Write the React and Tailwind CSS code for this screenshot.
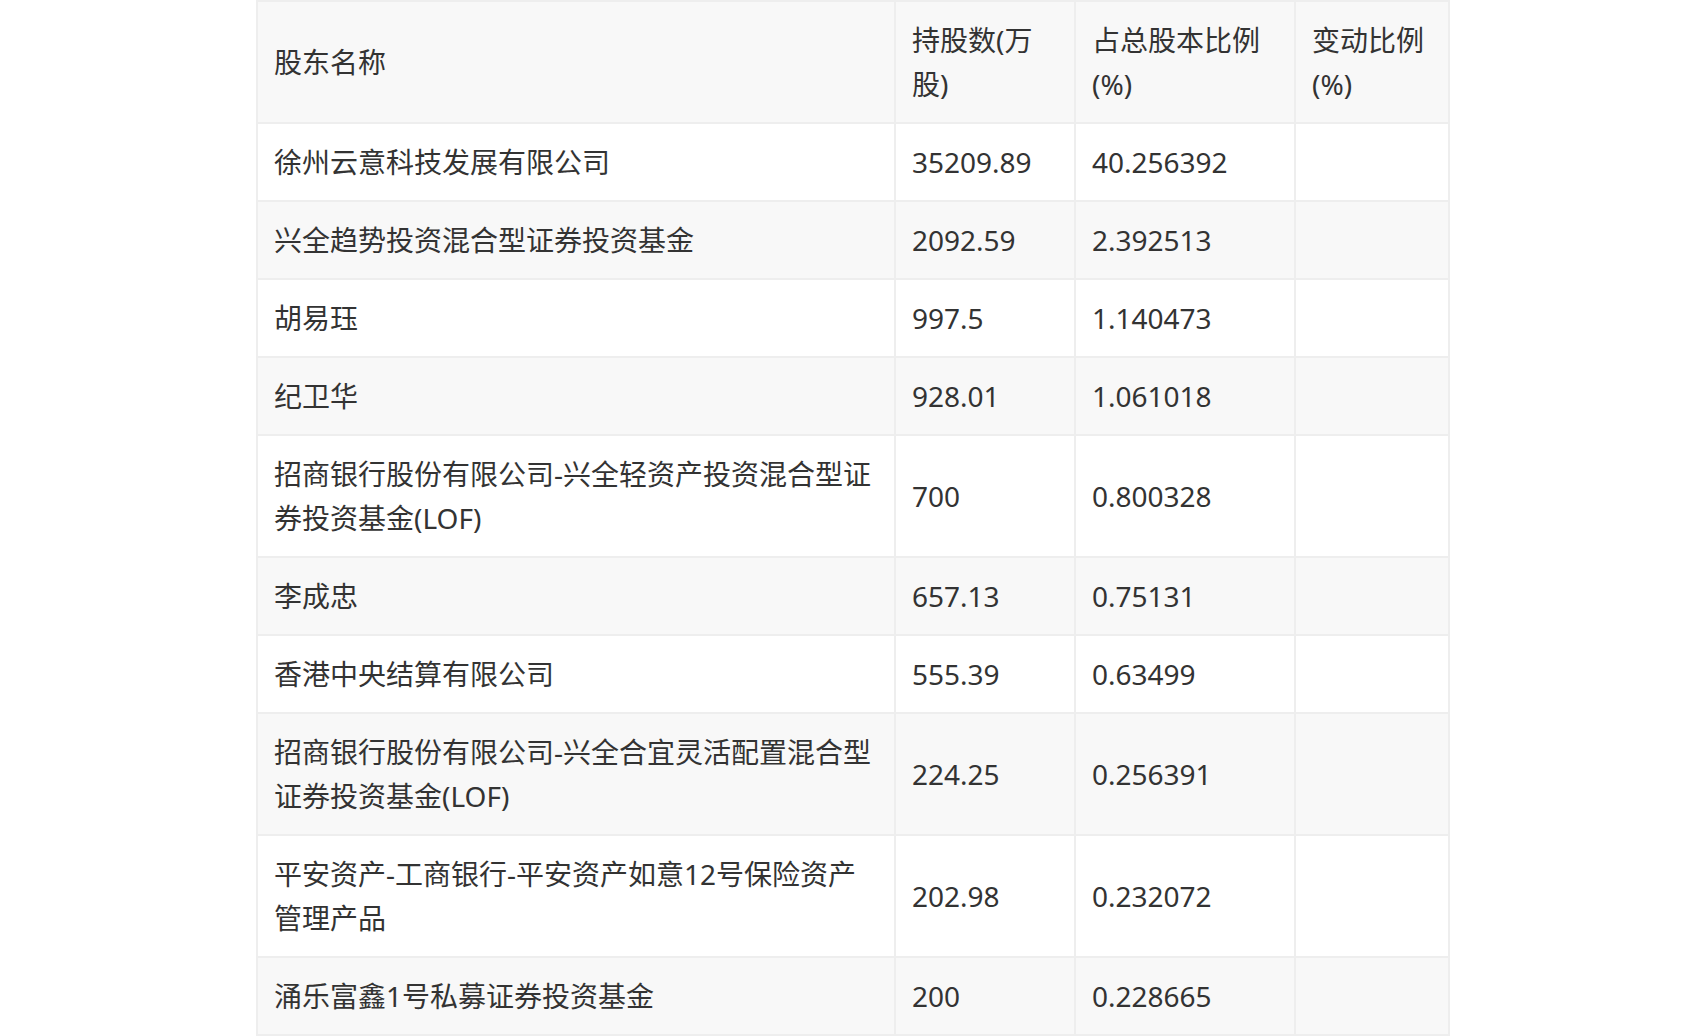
import React from 'react';

const rows = [
  ['徐州云意科技发展有限公司', '35209.89', '40.256392'],
  ['兴全趋势投资混合型证券投资基金', '2092.59', '2.392513'],
  ['胡易珏', '997.5', '1.140473'],
  ['纪卫华', '928.01', '1.061018'],
  ['招商银行股份有限公司-兴全轻资产投资混合型证券投资基金(LOF)', '700', '0.800328'],
  ['李成忠', '657.13', '0.75131'],
  ['香港中央结算有限公司', '555.39', '0.63499'],
  ['招商银行股份有限公司-兴全合宜灵活配置混合型证券投资基金(LOF)', '224.25', '0.256391'],
  ['平安资产-工商银行-平安资产如意12号保险资产管理产品', '202.98', '0.232072'],
  ['涌乐富鑫1号私募证券投资基金', '200', '0.228665'],
];

const cell = 'border-2 border-[#eeeeee] px-[16px] py-[16px] align-middle';

export default function App() {
  return (
    <div className="bg-white min-h-screen w-[1700px] text-[#333] text-[28px] leading-[44px]" style={{ fontFamily: '"Noto Sans", "Noto Sans CJK SC", sans-serif' }}>
      <table className="ml-[256px] w-[1192px] border-collapse table-fixed">
        <colgroup>
          <col className="w-[638px]" />
          <col className="w-[180px]" />
          <col className="w-[220px]" />
          <col className="w-[154px]" />
        </colgroup>
        <thead>
          <tr className="bg-[#f8f8f8] text-left">
            <th className={`${cell} font-normal`}>股东名称</th>
            <th className={`${cell} font-normal`}>持股数(万股)</th>
            <th className={`${cell} font-normal`}>占总股本比例(%)</th>
            <th className={`${cell} font-normal`}>变动比例(%)</th>
          </tr>
        </thead>
        <tbody>
          {rows.map((r, i) => (
            <tr key={i} className={i % 2 === 0 ? 'bg-white' : 'bg-[#f8f8f8]'}>
              <td className={cell}>{r[0]}</td>
              <td className={cell}>{r[1]}</td>
              <td className={cell}>{r[2]}</td>
              <td className={cell}></td>
            </tr>
          ))}
        </tbody>
      </table>
    </div>
  );
}
